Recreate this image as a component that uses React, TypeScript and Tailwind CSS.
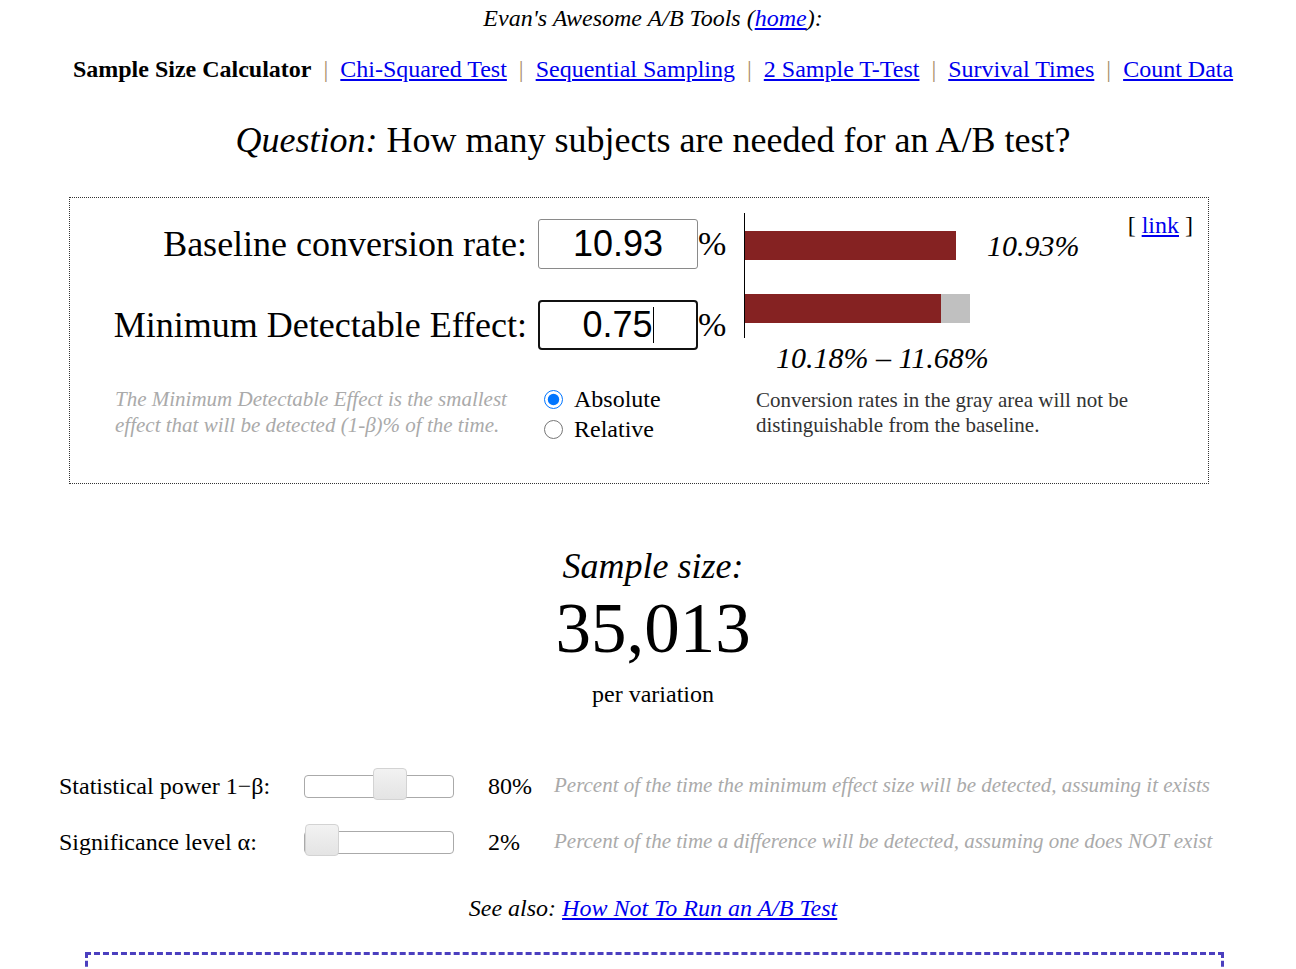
const serif = "font-['Liberation_Serif','Times_New_Roman',serif]";

function Sep() {
  return <span className="mx-[12px] text-[#a88e6a]">|</span>;
}

function Slider({ pos }: { pos: number }) {
  return (
    <div className="relative h-[23px] w-[150px] rounded-[4px] border border-[#aaaaaa] bg-white">
      <div
        className="absolute top-[-8px] h-[32px] w-[34px] rounded-[4px] border border-[#d3d3d3] bg-gradient-to-b from-[#f2f2f2] to-[#e4e4e4]"
        style={{ left: pos }}
      />
    </div>
  );
}

export default function App() {
  return (
    <div className={`min-h-screen bg-white text-black ${serif}`}>
      <p className="pl-[10px] pt-[5px] text-center text-[24px] italic leading-[26px]">
        Evan's Awesome A/B Tools (
        <a href="#" className="text-[#0000ee] underline">
          home
        </a>
        ):
      </p>

      <nav className="mt-[25px] pl-[10px] text-center text-[24px] leading-[26px]">
        <b>Sample Size Calculator</b>
        <Sep />
        <a href="#" className="text-[#0000ee] underline">Chi-Squared Test</a>
        <Sep />
        <a href="#" className="text-[#0000ee] underline">Sequential Sampling</a>
        <Sep />
        <a href="#" className="text-[#0000ee] underline">2 Sample T-Test</a>
        <Sep />
        <a href="#" className="text-[#0000ee] underline">Survival Times</a>
        <Sep />
        <a href="#" className="text-[#0000ee] underline">Count Data</a>
      </nav>

      <h1 className="mt-[38px] pl-[10px] text-center text-[36px] leading-[40px]">
        <i>Question:</i> How many subjects are needed for an A/B test?
      </h1>

      <div className="ml-[69px] mt-[37px] box-border h-[287px] w-[1140px] border border-dotted border-[#333]">
        <div className="flex">
          {/* inputs */}
          <div className="w-[674px] pt-[21px]">
            <div className="flex h-[50px] items-center">
              <label className="w-[468px] pr-[11px] text-right text-[36px] leading-[50px]">
                Baseline conversion rate:
              </label>
              <input
                readOnly
                value="10.93"
                className="box-border h-[50px] w-[160px] rounded-[3px] border border-[#8a8a8a] text-center font-['Liberation_Sans',Arial,sans-serif] text-[36px] outline-none"
              />
              <span className="text-[34px] leading-[50px]">%</span>
            </div>
            <div className="mt-[31px] flex h-[50px] items-center">
              <label className="w-[468px] pr-[11px] text-right text-[36px] leading-[50px]">
                Minimum Detectable Effect:
              </label>
              <div className="box-border flex h-[50px] w-[160px] items-center justify-center rounded-[4px] border-2 border-[#111] font-['Liberation_Sans',Arial,sans-serif] text-[36px]">
                <span>0.75</span>
                <span className="inline-block h-[36px] w-px bg-black" />
              </div>
              <span className="text-[34px] leading-[50px]">%</span>
            </div>
          </div>

          {/* chart */}
          <div className="pt-[15px]">
            <div className="h-[125px] w-[360px] border-l border-black pt-[18px]">
              <div className="flex h-[29px] items-center">
                <div className="h-[29px] w-[211px] bg-[#852222]" />
                <span className="ml-[31px] text-[30px] italic leading-[29px]">10.93%</span>
              </div>
              <div className="mt-[34px] flex">
                <div className="h-[29px] w-[196px] bg-[#852222]" />
                <div className="h-[29px] w-[29px] bg-[#c0c0c0]" />
              </div>
            </div>
            <p className="ml-[32px] mt-[4px] text-[30px] italic leading-[32px]">10.18% – 11.68%</p>
          </div>

          <div className="ml-auto pr-[15px] pt-[14px] text-[24px] leading-[26px]">
            [ <a href="#" className="text-[#0000ee] underline">link</a> ]
          </div>
        </div>

        <div className="mt-[12px] flex">
          <p className="ml-[45px] w-[429px] text-[21px] italic leading-[26px] text-[#aaaaaa]">
            The Minimum Detectable Effect is the smallest effect that will be detected (1-β)% of the time.
          </p>
          <div className="-mt-[2px] w-[212px] text-[24px] leading-[30px]">
            <label className="flex items-center">
              <input type="radio" name="mode" defaultChecked className="m-0 h-[19px] w-[19px] accent-[#0075ff]" />
              <span className="ml-[11px]">Absolute</span>
            </label>
            <label className="flex items-center">
              <input type="radio" name="mode" className="m-0 h-[19px] w-[19px]" />
              <span className="ml-[11px]">Relative</span>
            </label>
          </div>
          <p className="mt-[2px] w-[385px] text-[21px] leading-[25px] text-[#333]">
            Conversion rates in the gray area will not be distinguishable from the baseline.
          </p>
        </div>
      </div>

      <div className="pl-[10px] text-center">
        <p className="mt-[60px] text-[36px] italic leading-[44px]">Sample size:</p>
        <p className="mt-[2px] text-[71px] leading-[76px]">35,013</p>
        <p className="mt-[15px] text-[24px] leading-[26px]">per variation</p>
      </div>

      <div className="ml-[59px] mt-[51px] grid grid-cols-[245px_184px_66px_auto] items-center text-[24px]">
        <div className="h-[56px] leading-[56px]">Statistical power 1−β:</div>
        <div><Slider pos={68} /></div>
        <div>80%</div>
        <div className="text-[21px] italic text-[#aaaaaa]">
          Percent of the time the minimum effect size will be detected, assuming it exists
        </div>
        <div className="h-[56px] leading-[56px]">Significance level α:</div>
        <div><Slider pos={0} /></div>
        <div>2%</div>
        <div className="text-[21px] italic text-[#aaaaaa]">
          Percent of the time a difference will be detected, assuming one does NOT exist
        </div>
      </div>

      <p className="mt-[25px] pl-[10px] text-center text-[24px] italic leading-[26px]">
        See also: <a href="#" className="text-[#0000ee] underline">How Not To Run an A/B Test</a>
      </p>

      <div className="ml-[85px] mt-[31px] h-[200px] w-[1139px] border-[3px] border-dashed border-[#4b3fbf]" />
    </div>
  );
}
